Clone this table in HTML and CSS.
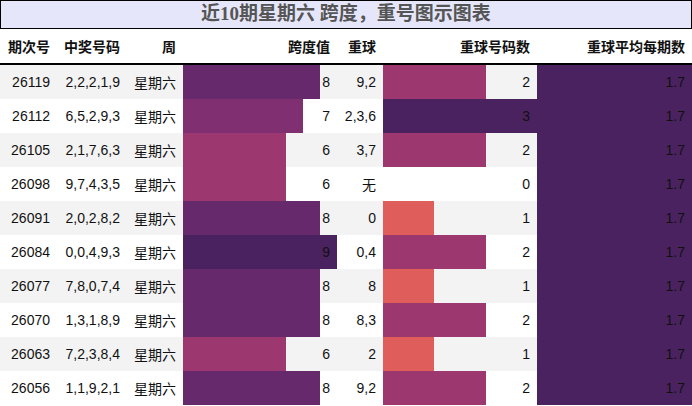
FILE: index.html
```html
<!DOCTYPE html>
<html lang="zh">
<head>
<meta charset="utf-8">
<title>近10期星期六 跨度，重号图示图表</title>
<link rel="stylesheet" href="styles.css">
</head>
<body>
<div class="wrap">
  <div class="title">近10期星期六 跨度，重号图示图表</div>
  <table class="grid">
    <colgroup>
      <col class="c1"><col class="c2"><col class="c3"><col class="c4"><col class="c5"><col class="c6"><col class="c7">
    </colgroup>
    <thead>
      <tr><th>期次号</th><th>中奖号码</th><th>周</th><th>跨度值</th><th>重球</th><th>重球号码数</th><th>重球平均每期数</th></tr>
    </thead>
    <tbody>
      <tr><td>26119</td><td>2,2,2,1,9</td><td>星期六</td><td class="bar k8" style="--w:88.9%">8</td><td>9,2</td><td class="bar n2" style="--w:66.7%">2</td><td class="bar avg">1.7</td></tr>
      <tr><td>26112</td><td>6,5,2,9,3</td><td>星期六</td><td class="bar k7" style="--w:77.8%">7</td><td>2,3,6</td><td class="bar n3" style="--w:100%">3</td><td class="bar avg">1.7</td></tr>
      <tr><td>26105</td><td>2,1,7,6,3</td><td>星期六</td><td class="bar k6" style="--w:66.7%">6</td><td>3,7</td><td class="bar n2" style="--w:66.7%">2</td><td class="bar avg">1.7</td></tr>
      <tr><td>26098</td><td>9,7,4,3,5</td><td>星期六</td><td class="bar k6" style="--w:66.7%">6</td><td>无</td><td>0</td><td class="bar avg">1.7</td></tr>
      <tr><td>26091</td><td>2,0,2,8,2</td><td>星期六</td><td class="bar k8" style="--w:88.9%">8</td><td>0</td><td class="bar n1" style="--w:33.3%">1</td><td class="bar avg">1.7</td></tr>
      <tr><td>26084</td><td>0,0,4,9,3</td><td>星期六</td><td class="bar k9" style="--w:100%">9</td><td>0,4</td><td class="bar n2" style="--w:66.7%">2</td><td class="bar avg">1.7</td></tr>
      <tr><td>26077</td><td>7,8,0,7,4</td><td>星期六</td><td class="bar k8" style="--w:88.9%">8</td><td>8</td><td class="bar n1" style="--w:33.3%">1</td><td class="bar avg">1.7</td></tr>
      <tr><td>26070</td><td>1,3,1,8,9</td><td>星期六</td><td class="bar k8" style="--w:88.9%">8</td><td>8,3</td><td class="bar n2" style="--w:66.7%">2</td><td class="bar avg">1.7</td></tr>
      <tr><td>26063</td><td>7,2,3,8,4</td><td>星期六</td><td class="bar k6" style="--w:66.7%">6</td><td>2</td><td class="bar n1" style="--w:33.3%">1</td><td class="bar avg">1.7</td></tr>
      <tr><td>26056</td><td>1,1,9,2,1</td><td>星期六</td><td class="bar k8" style="--w:88.9%">8</td><td>9,2</td><td class="bar n2" style="--w:66.7%">2</td><td class="bar avg">1.7</td></tr>
    </tbody>
  </table>
</div>
</body>
</html>
```
FILE: styles.css
```css
html, body {
  margin: 0;
  padding: 0;
  background: #fff;
}
.wrap {
  width: 692px;
}
.title {
  box-sizing: border-box;
  height: 29px;
  border: 1px solid #000;
  background: #e6e6fa;
  color: #555;
  font-family: "Liberation Serif", "Noto Sans CJK SC", serif;
  font-weight: bold;
  font-size: 19px;
  line-height: 26px;
  text-align: center;
}
.grid {
  width: 692px;
  table-layout: fixed;
  border-collapse: separate;
  border-spacing: 0;
  font-family: "Liberation Sans", "Noto Sans CJK SC", sans-serif;
  font-size: 14px;
  color: #111;
}
.c1 { width: 57px; }
.c2 { width: 70px; }
.c3 { width: 56px; }
.c4 { width: 154px; }
.c5 { width: 46px; }
.c6 { width: 154px; }
.c7 { width: 155px; }
.grid th {
  box-sizing: border-box;
  height: 36px;
  padding: 0 7px;
  text-align: right;
  font-weight: bold;
  border-bottom: 2px solid #000;
  vertical-align: middle;
}
.grid td {
  box-sizing: border-box;
  height: 34px;
  padding: 0 7px;
  text-align: right;
  vertical-align: middle;
  white-space: nowrap;
}
.grid tbody tr:nth-child(odd) td {
  background-color: #f3f3f3;
}
.grid tbody tr:nth-child(even) td {
  background-color: #fff;
}
.grid tbody tr td.bar {
  background-image: linear-gradient(90deg, var(--c) var(--w), transparent var(--w));
}
.k9, .n3 { --c: #4b2260; }
.k8 { --c: #662a6c; }
.k7 { --c: #802f71; }
.k6, .n2 { --c: #9c3770; }
.n1 { --c: #df5e5b; }
.grid tbody tr td.avg {
  --w: 100%;
  --c: #4b2260;
  background-color: #4b2260;
}
```
